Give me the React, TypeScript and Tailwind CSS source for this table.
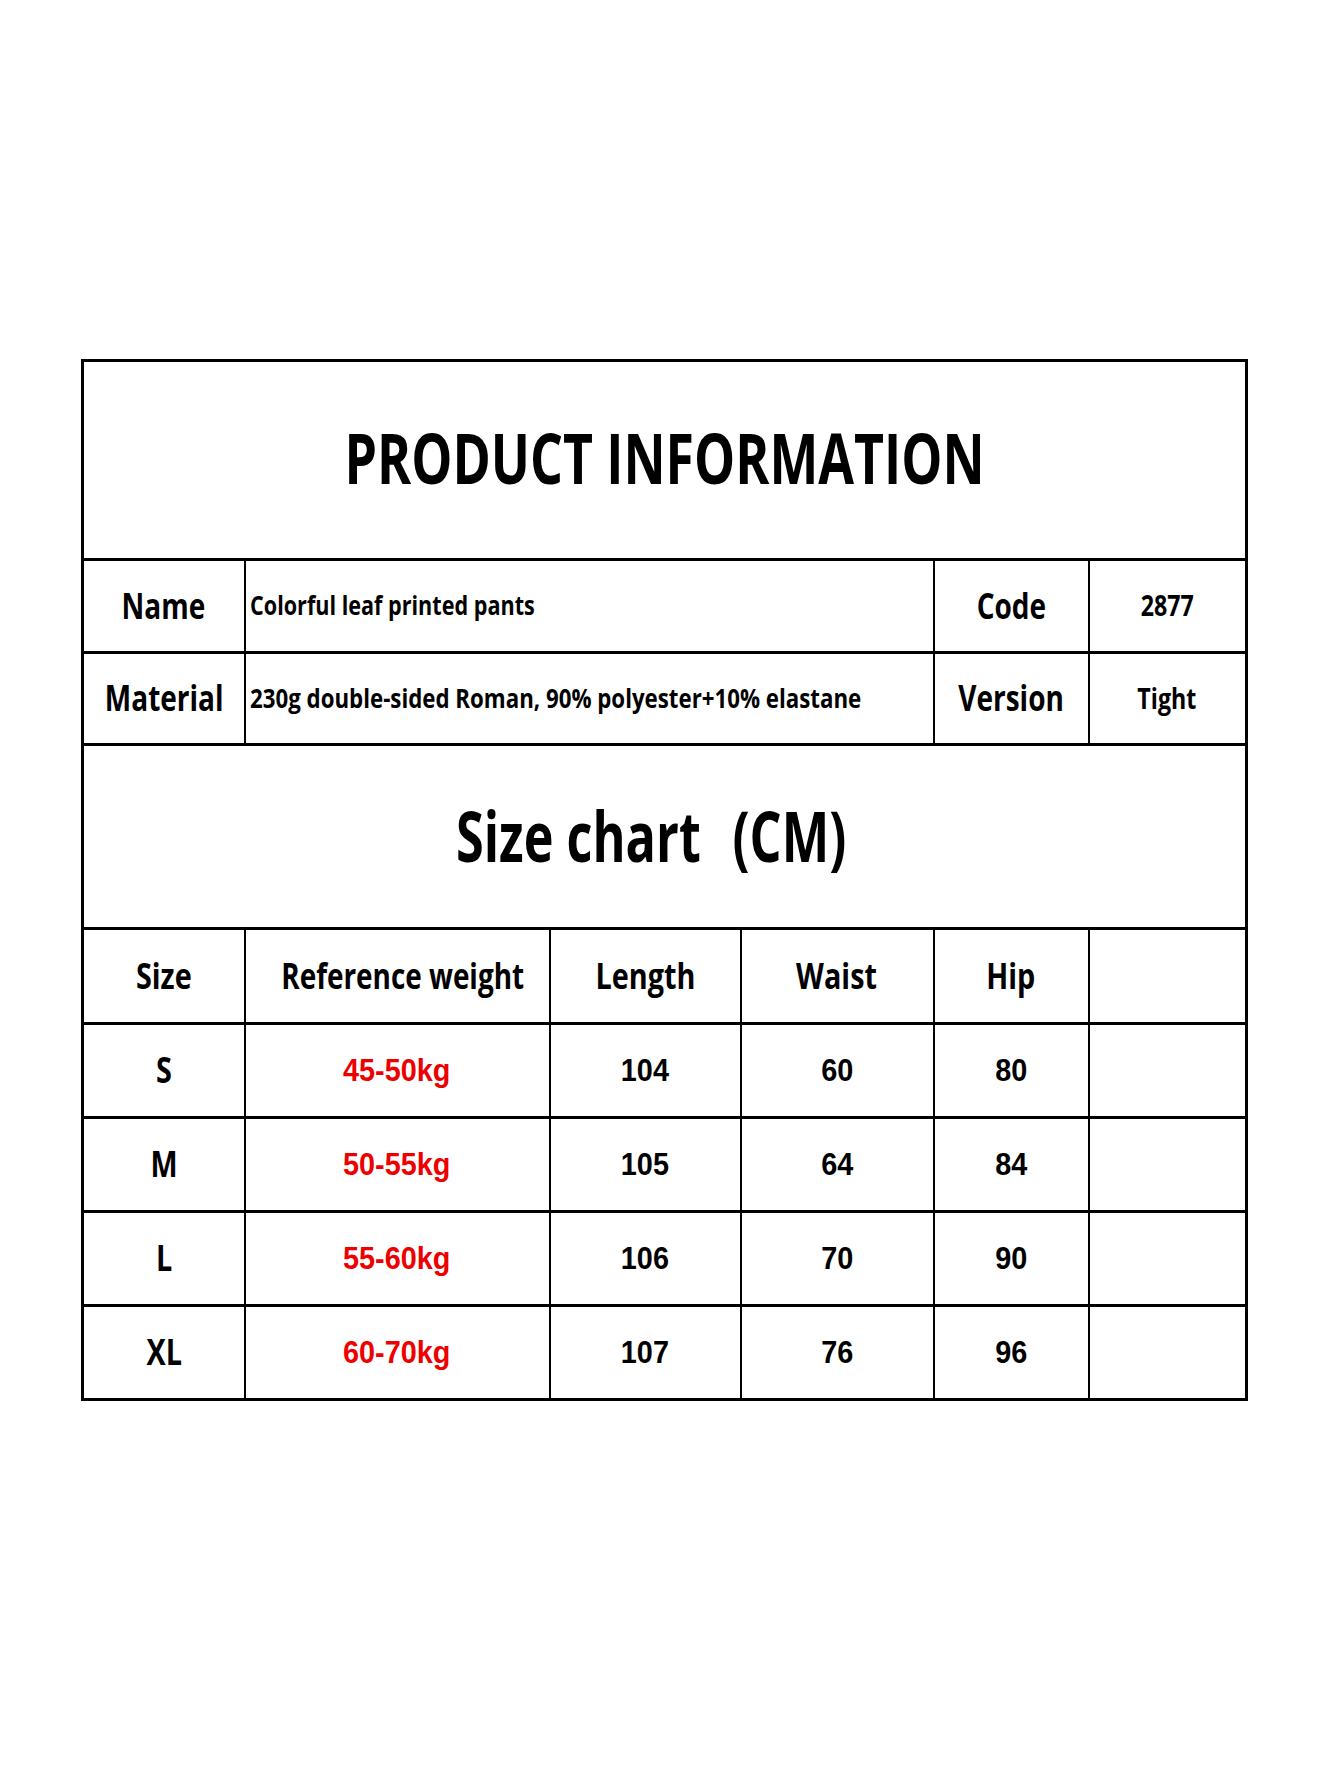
import React from "react";

const sizes = [
  { size: "S", weight: "45-50kg", length: "104", waist: "60", hip: "80" },
  { size: "M", weight: "50-55kg", length: "105", waist: "64", hip: "84" },
  { size: "L", weight: "55-60kg", length: "106", waist: "70", hip: "90" },
  { size: "XL", weight: "60-70kg", length: "107", waist: "76", hip: "96" },
];

const cell = "border-y-[3px] border-x-2 border-black text-center align-middle p-0";

const Label = ({ children }: { children: React.ReactNode }) => (
  <span className="inline-block scale-x-[0.8] whitespace-nowrap font-['Open_Sans',sans-serif] text-[35px] font-bold leading-none">
    {children}
  </span>
);

const Head = ({ children }: { children: React.ReactNode }) => (
  <span className="inline-block scale-x-[0.8] whitespace-nowrap font-['Open_Sans',sans-serif] text-[36px] font-bold leading-none">
    {children}
  </span>
);

const Num = ({ children, red }: { children: React.ReactNode; red?: boolean }) => (
  <span
    className={
      red
        ? "inline-block scale-x-[0.93] whitespace-nowrap font-['Liberation_Sans',Arial,sans-serif] text-[31px] font-bold leading-none text-[#ee0000]"
        : "inline-block scale-x-[0.93] whitespace-nowrap font-['Liberation_Sans',Arial,sans-serif] text-[31px] font-bold leading-none text-black"
    }
  >
    {children}
  </span>
);

export default function App() {
  return (
    <div className="min-h-[1785px] w-[1340px] bg-white pl-[81px] pt-[359px] text-black">
      <table className="w-[1164px] table-fixed border-collapse border-[3px] border-black">
        <colgroup>
          <col className="w-[162px]" />
          <col className="w-[305px]" />
          <col className="w-[191px]" />
          <col className="w-[193px]" />
          <col className="w-[155px]" />
          <col className="w-[158px]" />
        </colgroup>
        <tbody>
          {/* Product information */}
          <tr className="h-[199px]">
            <td colSpan={6} className={cell + " pb-[6px]"}>
              <span className="inline-block scale-x-[0.74] font-['Open_Sans',sans-serif] text-[70px] font-bold leading-none">
                PRODUCT INFORMATION
              </span>
            </td>
          </tr>
          <tr className="h-[93px]">
            <td className={cell}>
              <Label>Name</Label>
            </td>
            <td colSpan={3} className={cell + " !text-left pl-[4px]"}>
              <span className="inline-block origin-left scale-x-[0.8] whitespace-nowrap font-['Open_Sans',sans-serif] text-[27px] font-bold leading-none">
                Colorful leaf printed pants
              </span>
            </td>
            <td className={cell}>
              <Label>Code</Label>
            </td>
            <td className={cell}>
              <span className="inline-block scale-x-[0.8] font-['Open_Sans',sans-serif] text-[29px] font-bold leading-none">
                2877
              </span>
            </td>
          </tr>
          <tr className="h-[92px]">
            <td className={cell}>
              <Label>Material</Label>
            </td>
            <td colSpan={3} className={cell + " !text-left pl-[4px]"}>
              <span className="inline-block origin-left scale-x-[0.825] whitespace-nowrap font-['Open_Sans',sans-serif] text-[27px] font-bold leading-none">
                230g double-sided Roman, 90% polyester+10% elastane
              </span>
            </td>
            <td className={cell}>
              <Label>Version</Label>
            </td>
            <td className={cell}>
              <span className="inline-block scale-x-[0.8] font-['Open_Sans',sans-serif] text-[29px] font-bold leading-none">
                Tight
              </span>
            </td>
          </tr>

          {/* Size chart */}
          <tr className="h-[184px]">
            <td colSpan={6} className={cell + " pb-[4px]"}>
              <span className="inline-block scale-x-[0.72] whitespace-nowrap pr-[36px] font-['Open_Sans',sans-serif] text-[70px] font-bold leading-none">
                Size chart<span className="ml-[44px]">(CM)</span>
              </span>
            </td>
          </tr>
          <tr className="h-[95px]">
            <td className={cell}>
              <Head>Size</Head>
            </td>
            <td className={cell}>
              <span className="inline-block scale-x-[0.775] whitespace-nowrap font-['Open_Sans',sans-serif] text-[36px] font-bold leading-none">
                Reference weight
              </span>
            </td>
            <td className={cell}>
              <Head>Length</Head>
            </td>
            <td className={cell}>
              <Head>Waist</Head>
            </td>
            <td className={cell}>
              <Head>Hip</Head>
            </td>
            <td className={cell}></td>
          </tr>
          {sizes.map((row) => (
            <tr key={row.size} className="h-[94px]">
              <td className={cell}>
                <Head>{row.size}</Head>
              </td>
              <td className={cell}>
                <Num red>{row.weight}</Num>
              </td>
              <td className={cell}>
                <Num>{row.length}</Num>
              </td>
              <td className={cell}>
                <Num>{row.waist}</Num>
              </td>
              <td className={cell}>
                <Num>{row.hip}</Num>
              </td>
              <td className={cell}></td>
            </tr>
          ))}
        </tbody>
      </table>
    </div>
  );
}
